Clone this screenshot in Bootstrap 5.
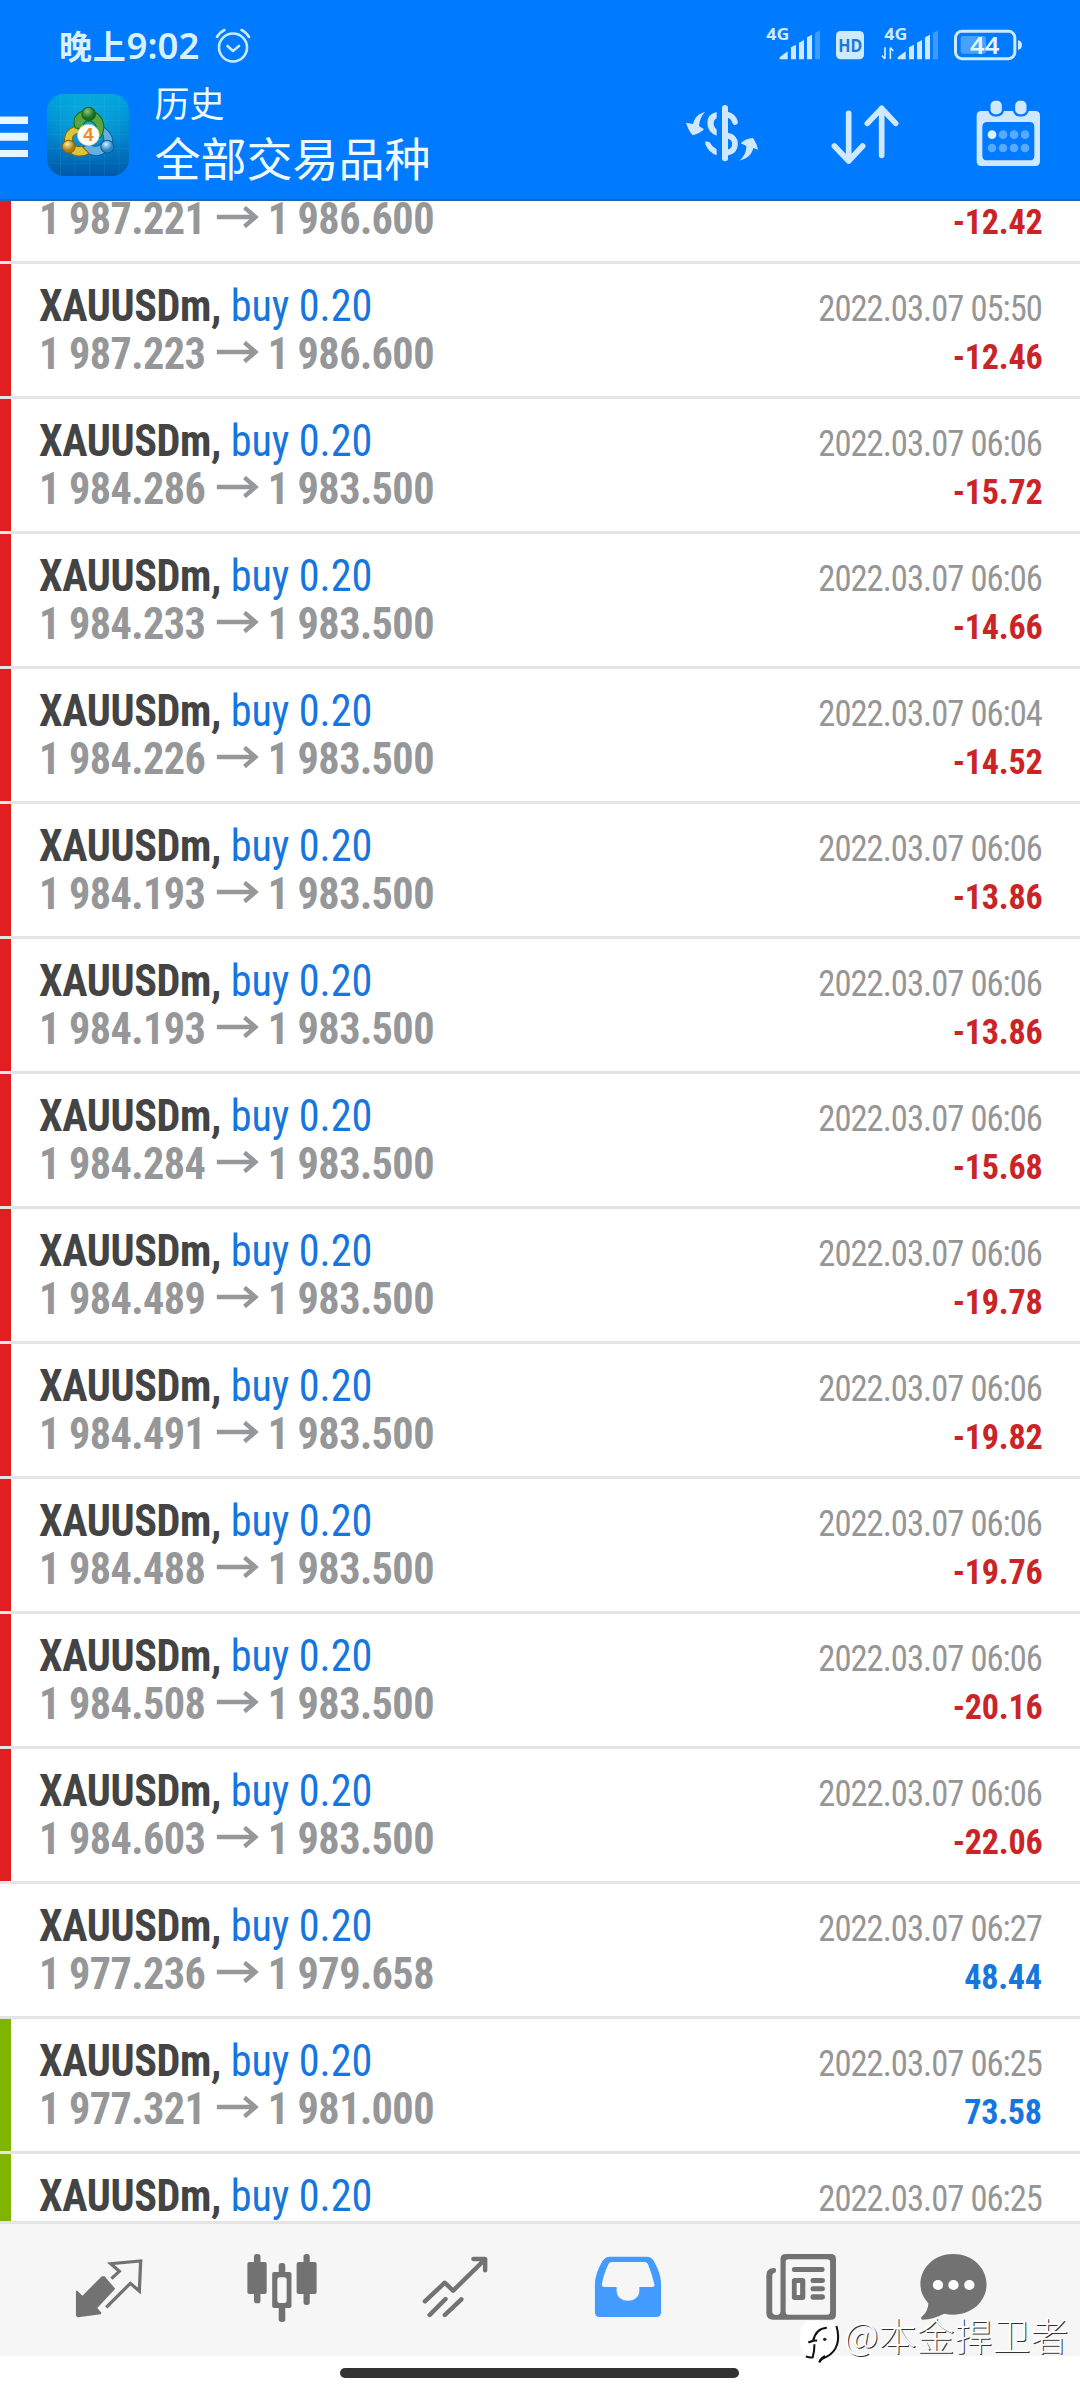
<!DOCTYPE html>
<html lang="zh-CN">
<head>
<meta charset="utf-8">
<meta name="viewport" content="width=device-width, initial-scale=1">
<title>历史</title>
<link href="https://cdn.jsdelivr.net/npm/bootstrap@5.3.0/dist/css/bootstrap.min.css" rel="stylesheet">
<style>
body{width:1080px;height:2400px;overflow:hidden;background:#fff;font-family:"Roboto Condensed",Roboto,"Noto Sans CJK SC",sans-serif}
.app-head{height:201px;background:#007aff;border-bottom:2px solid #2167b3;color:#effaff}
.status{height:84px;padding:26px 56px 0 59px}
.clock{font:500 33px/38px "Noto Sans CJK SC",sans-serif;color:#d9f1ff}
.clock-cn{font-weight:700;letter-spacing:.8px}
.clock b{font:600 36.5px/38px "Noto Sans",sans-serif}
.clock svg{margin:1px 0 0 16px}
.toolbar-row{height:115px;padding-right:32px}
.titles{padding-left:25.5px;font-family:"Noto Sans CJK SC",sans-serif}
.t1{font-size:35px;line-height:36px}
.t2{font-size:46px;line-height:73px}
.tools{gap:63px}
.history{height:2020px}
.deals{margin-top:-72px}
.deal{height:135px;border-bottom:3px solid #e4e4e4;position:relative;padding:18px 38px 0 39px}
.deal::before{content:"";position:absolute;left:0;top:0;width:11px;height:132px}
.deal.sl::before{background:#e11f21}
.deal.tp::before{background:#7fb400}
.ln{height:48px;line-height:48px;font-size:44px;white-space:pre}
.ln>:first-child{transform:scaleX(.96);transform-origin:left}
.ln>:last-child{transform:scaleX(.96);transform-origin:right}
.cond{font-stretch:75%}
.sym{color:#444;font-weight:700;letter-spacing:-.4px}
.side{color:#1676de;letter-spacing:-.1px}
.price{color:#969799;font-weight:700;letter-spacing:-.6px}
.when{color:#969696;font-size:36px;letter-spacing:-1px}
.loss{color:#cb2427;font-size:35.5px;font-weight:700;letter-spacing:-.25px}
.gain{color:#1676de;font-size:35.5px;font-weight:700;letter-spacing:-.25px}
.arrow{margin:0 9.5px 0 11.5px;vertical-align:6px}
.tabs{height:135px;border-top:3px solid #e4e4e4;background:#f6f6f6;padding-left:22px}
.tab{width:173px}
.tab:last-child{width:133px}
.homebar{width:399px;height:10px;border-radius:5px;background:#333;margin:12px 0 0 340px}
.wm{position:absolute;left:800px;top:2318px}
.wm-text{font:300 38px/42px "Noto Sans CJK SC",sans-serif;color:#fff;text-shadow:1px 1px 0 #333;margin-top:-5px}
svg{display:block;flex:none}
</style>
</head>
<body>
<header class="app-head">
  <div class="status d-flex justify-content-between">
    <div class="clock d-flex"><span class="clock-cn">晚上</span><b>9:02</b>
      <svg width="36" height="36" viewBox="0 0 36 36" fill="none" stroke="#c9e9ff" stroke-width="2.6" stroke-linecap="round" stroke-linejoin="round"><circle cx="18" cy="20.500" r="14"/><path d="M12.500 19l5.500 5 6-5M2 10q3-5 7.500-7M34 10q-3-5-7.500-7"/></svg>
    </div>
    <svg width="260" height="36" viewBox="372 78 780 108" overflow="visible" fill="#cfeaff" font-family="Noto Sans">
      <text x="379" y="121" font-size="46" font-weight="700" textLength="69" lengthAdjust="spacingAndGlyphs">4G</text>
      <path id="sig" d="M419 178v-6l24-18v24zM453 178v-36l15-8v44zM477 178v-50l15-8v58zM501 178v-66l15-8v74z"/>
      <path d="M525 178v-80l15-7v87z" opacity=".3"/>
      <rect x="588" y="93" width="84" height="85" rx="14"/>
      <text x="595" y="155" font-size="52" font-weight="700" fill="#1a78d8" textLength="72" lengthAdjust="spacingAndGlyphs">HD</text>
      <text x="733" y="121" font-size="46" font-weight="700" textLength="69" lengthAdjust="spacingAndGlyphs">4G</text>
      <path d="M735 142v34M735 177l-9-10M751 177v-34M751 143l9 10" stroke="#cfeaff" stroke-width="5" fill="none"/>
      <use href="#sig" x="354"/>
      <path d="M879 178v-80l15-7v87z" opacity=".3"/>
      <rect x="946.500" y="94" width="178" height="82" rx="19" fill="none" stroke="#cfeaff" stroke-width="9"/>
      <rect x="962" y="108" width="76" height="53" rx="7" opacity=".35"/>
      <path d="M1134 121q12 2 12 14t-12 15z"/>
      <text x="990" y="162" font-size="69" font-weight="600" fill="#e3f5ff" textLength="88" lengthAdjust="spacingAndGlyphs">44</text>
    </svg>
  </div>
  <div class="toolbar-row d-flex align-items-start justify-content-between">
    <div class="d-flex">
      <svg style="margin-top:10px;margin-right:19px" width="28" height="82" viewBox="0 0 28 82" fill="#e8f7ff"><path d="M0 22.500h28v7.500H0zM0 38.800h28v8H0zM0 56h28v7H0z"/></svg>
      <svg style="margin-top:10px" width="82" height="82" viewBox="136 282 238 246" preserveAspectRatio="none">
        <defs>
          <linearGradient id="bg" x2="0" y2="1"><stop stop-color="#00a6dd"/><stop offset=".5" stop-color="#0086cc"/><stop offset="1" stop-color="#0059a8"/></linearGradient>
          <radialGradient id="glow" cy=".35"><stop stop-color="#15b9e4" stop-opacity=".6"/><stop offset="1" stop-color="#15b9e4" stop-opacity="0"/></radialGradient>
          <radialGradient id="gr" cx=".4" cy=".3"><stop stop-color="#8fc973"/><stop offset="1" stop-color="#187021"/></radialGradient>
          <radialGradient id="ye" cx=".4" cy=".3"><stop stop-color="#fff19b"/><stop offset="1" stop-color="#a87c13"/></radialGradient>
          <radialGradient id="bl" cx=".4" cy=".3"><stop stop-color="#d2f0ff"/><stop offset="1" stop-color="#2485c9"/></radialGradient>
        </defs>
        <rect x="136" y="282" width="238" height="246" rx="50" fill="url(#bg)"/>
        <rect x="136" y="282" width="238" height="246" rx="50" fill="url(#glow)"/>
        <path d="M175 284v242M217 284v242M260 284v242M303 284v242M345 284v242M138 320h234M138 362h234M138 404h234M138 446h234M138 490h234" stroke="#5fd0f0" stroke-width="1.500" opacity=".22"/>
        <path d="M293 376c34 20 44 52 22 72-22 28-60 24-76-6l20-10c14 14 38 4 42-14 0-14-6-24-16-32z" fill="#63b1e2" stroke="#125c98" stroke-width="3"/>
        <path d="M222 378c-34 8-42 38-30 66 12 26 44 30 66 16l-22-22c-14 6-26-4-26-20 0-12 8-18 20-20z" fill="#dfc437" stroke="#806711" stroke-width="3"/>
        <path d="M218 384c-14-36 14-54 40-52 34 2 56 42 34 80l-16 2c8-28 4-48-18-52-14 0-18 12-18 24z" fill="#55a742" stroke="#19651e" stroke-width="3"/>
        <circle cx="257" cy="342" r="20" fill="url(#gr)" stroke="#19651e" stroke-width="3"/>
        <circle cx="199" cy="440" r="19" fill="url(#ye)" stroke="#806711" stroke-width="3"/>
        <circle cx="311" cy="440" r="19" fill="url(#bl)" stroke="#125c98" stroke-width="3"/>
        <circle cx="256" cy="405" r="32" fill="#fffdf8" stroke="#bbb69a" stroke-width="2"/>
        <text x="241" y="424" font-family="Liberation Sans" font-weight="700" font-size="54" fill="#f08a2c">4</text>
      </svg>
      <div class="titles"><div class="t1">历史</div><div class="t2">全部交易品种</div></div>
    </div>
    <div class="tools d-flex" style="margin-top:10px">
      <svg width="80" height="80" viewBox="126 282 240 240" fill="#cfe7ff"><path d="M195 336c-20 5-31 17-36 36l-21-4c5 16 11 28 20 38 14-3 25-9 34-18l-15-10c1-16 8-32 18-42zM298 482c24-6 38-19 42-38l14 5c-3-15-9-26-15-35-14 1-28 6-37 16l17 8c0 18-7 32-21 44z"/><path d="M230 336q-28 6-28 33 0 28 28 38v-19q-9-6-9-18 0-11 9-15zM196 424l12 2q8 14 22 22v18q-24-8-34-33z"/><path d="M255 324v151" stroke="#cfe7ff" stroke-width="18" stroke-linecap="round"/><path d="M263 344q17 4 22 22" fill="none" stroke="#cfe7ff" stroke-width="17" stroke-linecap="round"/><path d="M262 407c18 3 23 12 23 25s-8 23-23 26" fill="none" stroke="#cfe7ff" stroke-width="17"/></svg>
      <svg width="80" height="80" viewBox="555 282 240 240" fill="none" stroke="#cfe7ff" stroke-width="17" stroke-linecap="round" stroke-linejoin="round"><path d="M626 340v143M583 438l43 45 42-45M725 466V325M682 370l43-45 42 45"/></svg>
      <svg width="80" height="80" viewBox="984 282 240 240" fill="#cfe7ff"><path fill-rule="evenodd" d="M1024 333h162q14 0 14 14v137q0 14-14 14h-162q-14 0-14-14V347q0-14 14-14zM1042 366q-15 0-15 15v86q0 14 15 14h127q14 0 14-14v-86q0-15-14-15z"/><g stroke="#007aff" stroke-width="7"><rect x="1048" y="299" width="41" height="47" rx="17"/><rect x="1122" y="299" width="41" height="47" rx="17"/></g><circle cx="1056" cy="404" r="13" fill="#d9f4ff"/><g opacity=".43"><circle cx="1089" cy="404" r="13"/><circle cx="1122" cy="404" r="13"/><circle cx="1155" cy="404" r="13"/><circle cx="1056" cy="444" r="13"/><circle cx="1089" cy="444" r="13"/><circle cx="1122" cy="444" r="13"/><circle cx="1155" cy="444" r="13"/></g></svg>
    </div>
  </div>
</header>
<main class="history overflow-hidden"><div class="deals" id="deals"></div></main>
<nav class="tabs d-flex align-items-center">
  <div class="tab d-flex justify-content-center"><svg width="72" height="72" viewBox="210.500 192 209 216" preserveAspectRatio="none"><path d="M219 302l4 0 15 15 56-58 8 0 31 37-52 58 12 14-2 5-66 9-6-4z" fill="#727272"/><path d="M322 266l23-22-25-23 87-8-4 90-26-23-70 72" fill="none" stroke="#727272" stroke-width="9.500"/></svg></div>
  <div class="tab d-flex justify-content-center"><svg width="72" height="72" viewBox="176 192 209 216" preserveAspectRatio="none" fill="#727272"><g transform="translate(-536)"><rect x="716" y="216" width="56" height="96" rx="6"/><rect x="735" y="192" width="19" height="148" rx="8"/><rect x="859" y="216" width="58" height="96" rx="6"/><rect x="879" y="192" width="18" height="153" rx="8"/><rect x="807" y="219" width="19" height="177" rx="8"/><rect x="788" y="246" width="56" height="108" rx="6"/><rect x="803" y="262" width="27" height="77" rx="7" fill="#f6f6f6"/></g></svg></div>
  <div class="tab d-flex justify-content-center"><svg width="72" height="72" viewBox="1214 192 209 216" preserveAspectRatio="none" fill="none" stroke="#727272" stroke-width="13" stroke-linecap="round" stroke-linejoin="round"><path d="M1231 334l58-56 24 24 93-94M1372 207h34v34M1245 375l46-48M1289 375l48-47"/></svg></div>
  <div class="tab d-flex justify-content-center"><svg width="72" height="72" viewBox="149.500 192 209 216" preserveAspectRatio="none"><path fill="#449bff" fill-rule="evenodd" d="M202 200h106q14 0 21 13 21 38 21 70v84q0 14-14 14H172q-14 0-14-14v-84q0-32 22-70 8-13 22-13zM208 216q-8 0-11 7-15 34-19 61 0 7 7 7h36v11c0 40 66 40 66 0v-11h38q7 0 6-7-6-27-19-61-3-7-11-7z"/></svg></div>
  <div class="tab d-flex justify-content-center"><svg width="72" height="72" viewBox="653 192 209 216" preserveAspectRatio="none" fill="#727272"><path fill-rule="evenodd" d="M714 192h130q15 0 15 15v167q0 15-15 15H676q-19 0-19-19V255q0-20 22-21 7 0 6 8 0 7-6 7-5 1-5 9v105q0 12 12 12t12-12V207q0-15 16-15zM721 208q-8 0-8 8v150q0 8 8 8h112q9 0 9-8V216q0-8-9-8z"/><rect x="731" y="231" width="95" height="15" rx="7"/><path fill-rule="evenodd" d="M739 264h23q8 0 8 8v50q0 8-8 8h-23q-8 0-8-8v-50q0-8 8-8zM745 279v36h10v-36z"/><rect x="785" y="264" width="42" height="15" rx="7"/><rect x="785" y="289" width="42" height="15" rx="7"/><rect x="785" y="313" width="42" height="16" rx="7"/></svg></div>
  <div class="tab d-flex justify-content-center"><svg width="72" height="72" viewBox="1096 192 209 216" preserveAspectRatio="none"><path fill="#727272" d="M1198 192c54 0 97 40 97 91s-43 91-97 91q-12 0-26-3-30 16-62 18-8-2-4-8 20-17 20-41-23-26-23-57c0-51 42-91 95-91z"/><g fill="#fff"><circle cx="1154" cy="285" r="15"/><circle cx="1199" cy="285" r="15"/><circle cx="1245" cy="285" r="15"/></g></svg></div>
</nav>
<div class="homebar"></div>
<div class="wm d-flex">
  <svg width="44" height="48" viewBox="756 384 128 144" preserveAspectRatio="none"><rect x="757" y="392" width="108" height="108" rx="34" fill="#fff"/><path d="M782 457l12-4q8-38 40-40M780 457q14-6 26-5M798 463q0 22-5 39-8 2-20-3M862 408c12 42 2 76-28 92q-14 5-22 17 4-12 17-19" fill="none" stroke="#111" stroke-width="6"/><circle cx="828" cy="448" r="5" fill="#222"/></svg>
  <div class="wm-text">@本金捍卫者</div>
</div>
<script>
const deals = [
  ["sl","1 987.221","1 986.600","","-12.42"],
  ["sl","1 987.223","1 986.600","05:50","-12.46"],
  ["sl","1 984.286","1 983.500","06:06","-15.72"],
  ["sl","1 984.233","1 983.500","06:06","-14.66"],
  ["sl","1 984.226","1 983.500","06:04","-14.52"],
  ["sl","1 984.193","1 983.500","06:06","-13.86"],
  ["sl","1 984.193","1 983.500","06:06","-13.86"],
  ["sl","1 984.284","1 983.500","06:06","-15.68"],
  ["sl","1 984.489","1 983.500","06:06","-19.78"],
  ["sl","1 984.491","1 983.500","06:06","-19.82"],
  ["sl","1 984.488","1 983.500","06:06","-19.76"],
  ["sl","1 984.508","1 983.500","06:06","-20.16"],
  ["sl","1 984.603","1 983.500","06:06","-22.06"],
  ["","1 977.236","1 979.658","06:27","48.44"],
  ["tp","1 977.321","1 981.000","06:25","73.58"],
  ["tp","","","06:25",""]
];
const arrow = '<svg class="arrow d-inline-block" width="44" height="22" viewBox="0 0 44 22" fill="none" stroke="#969799" stroke-width="4.4"><path d="M0 11h41M29 1.500l11.500 9.500-11.500 9.500"/></svg>';
document.getElementById("deals").innerHTML = deals.map(([kind, open, close, time, profit]) => `
  <div class="deal cond ${kind}">
    <div class="ln d-flex justify-content-between align-items-baseline">${time ? `<div><span class="sym">XAUUSDm,</span> <span class="side">buy 0.20</span></div><span class="when">2022.03.07 ${time}</span>` : ""}</div>
    ${open ? `<div class="ln d-flex justify-content-between align-items-baseline"><div class="price">${open}${arrow}${close}</div><span class="${profit[0] === "-" ? "loss" : "gain"}">${profit}</span></div>` : ""}
  </div>`).join("");
</script>
<script src="https://cdn.jsdelivr.net/npm/bootstrap@5.3.0/dist/js/bootstrap.bundle.min.js"></script>
</body>
</html>
